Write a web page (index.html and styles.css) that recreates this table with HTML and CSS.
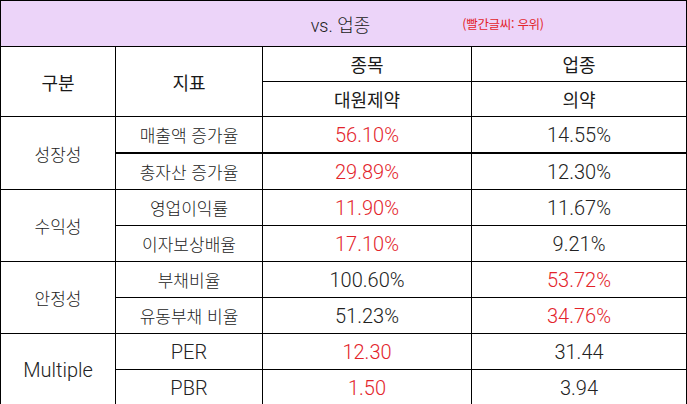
FILE: index.html
```html
<!DOCTYPE html>
<html lang="ko">
<head>
<meta charset="utf-8">
<title>vs. 업종</title>
<link rel="stylesheet" href="styles.css">
</head>
<body>
<table class="cmp">
  <colgroup>
    <col class="c1"><col class="c2"><col class="c3"><col class="c4">
  </colgroup>
  <tr class="band">
    <td colspan="4">
      <div class="band-inner">
        <span></span>
        <span class="title">vs. 업종</span>
        <span class="note">(빨간글씨: 우위)</span>
      </div>
    </td>
  </tr>
  <tr class="hd">
    <th rowspan="2">구분</th>
    <th rowspan="2">지표</th>
    <th>종목</th>
    <th>업종</th>
  </tr>
  <tr class="hd">
    <th>대원제약</th>
    <th>의약</th>
  </tr>
  <tr class="row">
    <td rowspan="2" class="grp">성장성</td>
    <td class="lbl">매출액 증가율</td>
    <td class="num red">56.10%</td>
    <td class="num">14.55%</td>
  </tr>
  <tr class="row thick">
    <td class="lbl">총자산 증가율</td>
    <td class="num red">29.89%</td>
    <td class="num">12.30%</td>
  </tr>
  <tr class="row">
    <td rowspan="2" class="grp">수익성</td>
    <td class="lbl">영업이익률</td>
    <td class="num red">11.90%</td>
    <td class="num">11.67%</td>
  </tr>
  <tr class="row">
    <td class="lbl">이자보상배율</td>
    <td class="num red">17.10%</td>
    <td class="num">9.21%</td>
  </tr>
  <tr class="row">
    <td rowspan="2" class="grp">안정성</td>
    <td class="lbl">부채비율</td>
    <td class="num">100.60%</td>
    <td class="num red">53.72%</td>
  </tr>
  <tr class="row">
    <td class="lbl">유동부채 비율</td>
    <td class="num">51.23%</td>
    <td class="num red">34.76%</td>
  </tr>
  <tr class="row">
    <td rowspan="2" class="grp latin">Multiple</td>
    <td class="lbl latin">PER</td>
    <td class="num red">12.30</td>
    <td class="num">31.44</td>
  </tr>
  <tr class="row">
    <td class="lbl latin">PBR</td>
    <td class="num red">1.50</td>
    <td class="num">3.94</td>
  </tr>
</table>
</body>
</html>
```

FILE: styles.css
```css
html, body {
  margin: 0;
  padding: 0;
  background: #ffffff;
}

.cmp {
  border-collapse: collapse;
  table-layout: fixed;
  width: 686px;
  height: 403px;
  font-family: Roboto, "Noto Sans CJK KR", sans-serif;
  color: #1a1a1a;
}

.c1 { width: 115px; }
.c2 { width: 147px; }
.c3 { width: 209px; }
.c4 { width: 215px; }

.cmp td, .cmp th {
  border: 1px solid #000;
  padding: 0;
  text-align: center;
  vertical-align: middle;
}

.band td {
  background: #ecd4f9;
  height: 45px;
}

.band-inner {
  display: grid;
  grid-template-columns: 1fr auto 1fr;
  align-items: center;
}

.title {
  font-family: Roboto, "Noto Sans CJK KR", sans-serif;
  font-weight: 300;
  font-size: 18px;
  color: #222;
  margin-right: 6px;
}

.note {
  justify-self: start;
  margin-left: 86px;
  font-family: "Noto Sans CJK KR", sans-serif;
  font-size: 12.5px;
  letter-spacing: -0.3px;
  color: #e3242b;
}

.hd th {
  font-family: "Noto Sans CJK KR", sans-serif;
  font-weight: 400;
  font-size: 18px;
  color: #1a1a1a;
  height: 34px;
}

.row td {
  height: 35px;
}

.row.thick td {
  border-top: 2px solid #000;
}

.grp, .lbl {
  font-family: "Noto Sans CJK KR", sans-serif;
  font-weight: 300;
  font-size: 17px;
  color: #222;
}

.latin {
  font-family: Roboto, sans-serif;
  font-size: 20px;
  font-weight: 300;
}

.num {
  font-family: Roboto, sans-serif;
  font-weight: 300;
  font-size: 20px;
  color: #222;
}

.num.red {
  color: #e3242b;
}
```
